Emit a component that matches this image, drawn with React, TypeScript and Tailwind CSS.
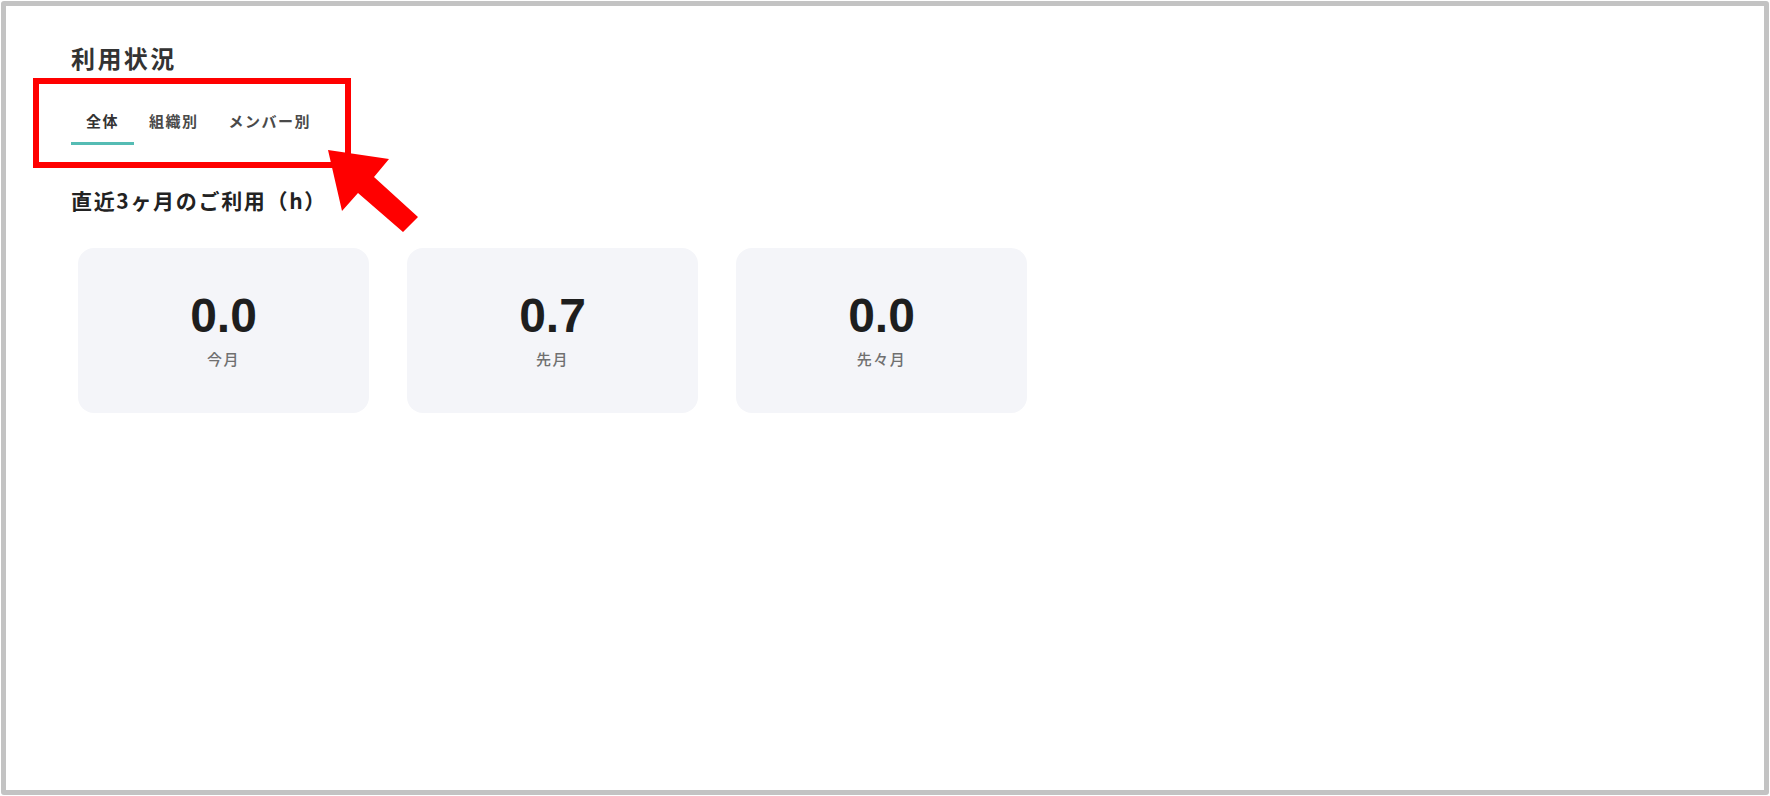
import React from "react";

const jp = { fontFamily: '"Noto Sans CJK JP", "Noto Sans", sans-serif' };

const stats = [
  { value: "0.0", label: "今月" },
  { value: "0.7", label: "先月" },
  { value: "0.0", label: "先々月" },
];

const tabs = ["全体", "組織別", "メンバー別"];

export default function App() {
  return (
    <div className="relative w-[1770px] h-[796px] bg-white overflow-hidden">
      <div
        className="ml-[1px] mt-[1px] w-[1768px] h-[794px] border-[5px] border-[#c3c3c3] rounded-[3px] bg-white pl-[65px] pt-[36px]"
        style={jp}
      >
        <h1 className="text-[24px] leading-[32px] font-bold tracking-[0.1em] text-[#333333]">
          利用状況
        </h1>

        <div className="mt-[29px] flex">
          {tabs.map((t, i) => (
            <div
              key={t}
              className={
                i === 0
                  ? "px-[15px] pt-[8px] pb-[11px] border-b-[3px] border-[#55bcb4] text-[15px] leading-[20px] font-bold tracking-[0.1em] text-[#333333]"
                  : "px-[15px] pt-[8px] pb-[11px] border-b-[3px] border-transparent text-[15px] leading-[20px] font-bold tracking-[0.1em] text-[#4a4a4a]"
              }
            >
              {t}
            </div>
          ))}
        </div>

        <h2 className="mt-[41px] text-[21px] leading-[28px] font-bold tracking-[0.08em] text-[#222222]">
          直近3ヶ月のご利用（h）
        </h2>

        <div className="mt-[34px] ml-[7px] flex gap-[38px]">
          {stats.map((s, i) => (
            <div
              key={i}
              className="w-[291px] h-[165px] rounded-2xl bg-[#f4f5f9] flex flex-col items-center justify-center"
            >
              <div
                className="text-[48px] leading-[48px] font-bold text-[#1e1e1e]"
                style={{ fontFamily: '"Liberation Sans", Arial, sans-serif' }}
              >
                {s.value}
              </div>
              <div className="mt-[9px] text-[15px] leading-[20px] font-medium tracking-[0.1em] text-[#707070]">
                {s.label}
              </div>
            </div>
          ))}
        </div>
      </div>

      <svg
        className="absolute left-0 top-0 pointer-events-none"
        width="1770"
        height="796"
        viewBox="0 0 1770 796"
      >
        <rect x="36" y="81" width="312" height="84" fill="none" stroke="#ff0000" strokeWidth="6" />
        <polygon
          points="328,150 389,159 374,177 418,217 403,232 358,193 342,211"
          fill="#ff0000"
        />
      </svg>
    </div>
  );
}
